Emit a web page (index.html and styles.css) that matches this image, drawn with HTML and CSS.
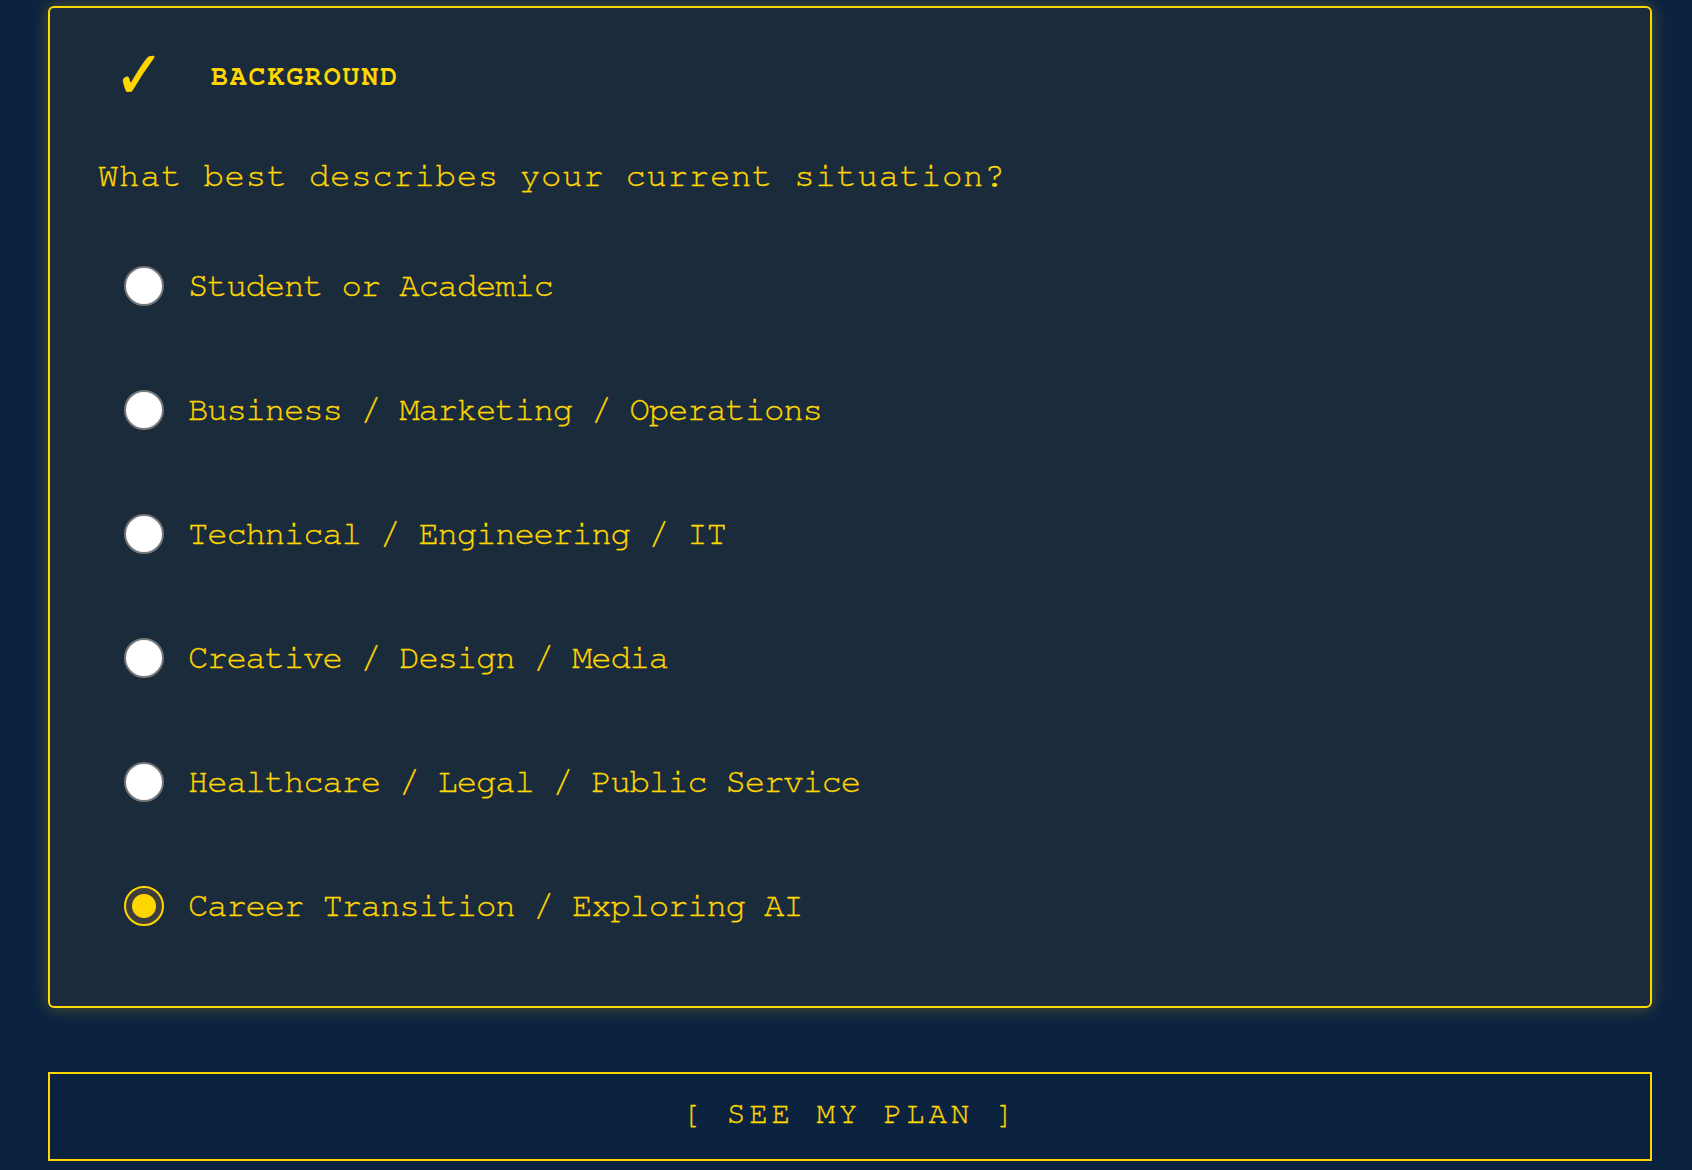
FILE: index.html
```html
<!DOCTYPE html>
<html lang="en">
<head>
<meta charset="utf-8">
<title>Background</title>
<link rel="stylesheet" href="styles.css">
</head>
<body>
<main class="page">
  <section class="card">
    <header class="card-head">
      <span class="check">✓</span>
      <span class="step-title">BACKGROUND</span>
    </header>
    <h2 class="question">What best describes your current situation?</h2>
    <div class="options">
      <label class="option"><input type="radio" name="bg" class="radio"><span>Student or Academic</span></label>
      <label class="option"><input type="radio" name="bg" class="radio"><span>Business / Marketing / Operations</span></label>
      <label class="option"><input type="radio" name="bg" class="radio"><span>Technical / Engineering / IT</span></label>
      <label class="option"><input type="radio" name="bg" class="radio"><span>Creative / Design / Media</span></label>
      <label class="option"><input type="radio" name="bg" class="radio"><span>Healthcare / Legal / Public Service</span></label>
      <label class="option"><input type="radio" name="bg" class="radio" checked><span>Career Transition / Exploring AI</span></label>
    </div>
  </section>
  <button class="plan-btn" type="button">[ SEE MY PLAN ]</button>
</main>
</body>
</html>
```
FILE: styles.css
```css
html, body {
  margin: 0;
  padding: 0;
  background: #0c2340;
}

body {
  font-family: "FreeMono", "Courier New", monospace;
  color: #ffd700;
}

.page {
  padding: 6px 40px 10px 48px;
  display: flex;
  flex-direction: column;
  gap: 64px;
}

.card {
  background: #1a2b3c;
  border: 2px solid #ffd700;
  border-radius: 6px;
  box-shadow: 0 0 16px rgba(255, 215, 0, 0.28);
  padding: 49px 46px 80px 48px;
}

.card-head {
  display: flex;
  align-items: center;
  height: 40px;
  padding-left: 16px;
}

.check {
  display: inline-block;
  font-family: "DejaVu Sans", sans-serif;
  font-weight: bold;
  font-size: 67px;
  line-height: 40px;
  width: 97px;
  padding-bottom: 5px;
  flex: none;
  color: #ffd700;
  -webkit-text-stroke: 0.6px #ffd700;
  transform: scaleX(0.9);
  transform-origin: left center;
}

.step-title {
  font-weight: bold;
  font-size: 28px;
  letter-spacing: 2px;
  line-height: 40px;
}

.question {
  margin: 59px 0 0 0;
  font-weight: normal;
  font-size: 34px;
  letter-spacing: 0.7px;
  line-height: 40px;
  -webkit-text-stroke: 0.3px #ffd700;
}

.options {
  margin-top: 70px;
  display: flex;
  flex-direction: column;
  gap: 84px;
  padding-left: 26px;
}

.option {
  display: flex;
  align-items: center;
  height: 40px;
  font-size: 34px;
  letter-spacing: -1.2px;
  line-height: 40px;
  -webkit-text-stroke: 0.3px #ffd700;
  cursor: pointer;
}

.radio {
  appearance: none;
  -webkit-appearance: none;
  margin: 0 24px 0 0;
  width: 40px;
  height: 40px;
  border-radius: 50%;
  border: 2px solid #767676;
  background: #ffffff;
  box-sizing: border-box;
  flex: none;
}

.radio:checked {
  border-color: #ffd700;
  background: radial-gradient(circle, #ffd700 0 11.5px, #3d3d3d 12.5px);
}

.plan-btn {
  display: block;
  width: 100%;
  height: 89px;
  padding: 0 0 7px 0;
  background: #0c2340;
  border: 2px solid #ffd700;
  border-radius: 0;
  color: #ffd700;
  font-family: inherit;
  font-size: 31px;
  letter-spacing: 3.8px;
  -webkit-text-stroke: 0.3px #ffd700;
  cursor: pointer;
}
```
